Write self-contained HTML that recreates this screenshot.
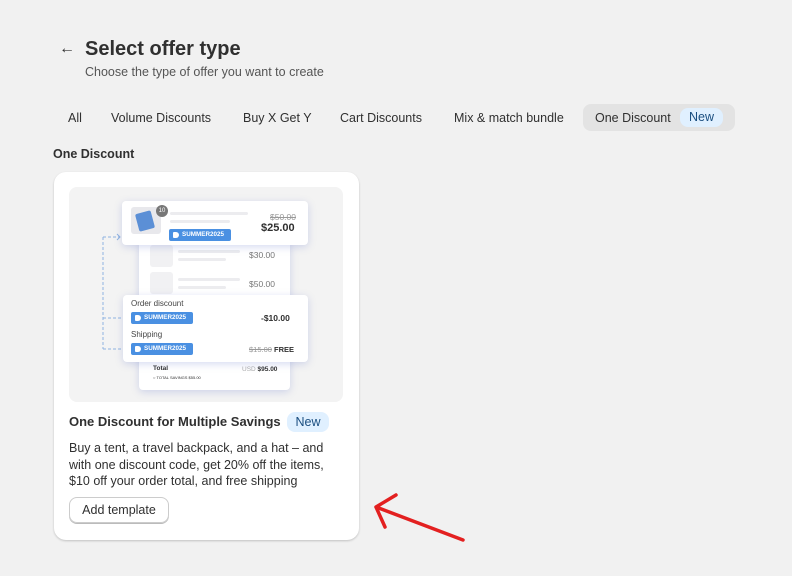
<!DOCTYPE html><html><head><style>
*{margin:0;padding:0;box-sizing:border-box}
body{width:792px;height:576px;background:#f1f1f1;font-family:"Liberation Sans",sans-serif;color:#303030;position:relative;overflow:hidden}
.a{position:absolute;white-space:nowrap}
.tab{position:absolute;top:111px;font-size:12.5px;color:#303030}
.tag{position:absolute;background:#4a90e2;color:#fff;font-size:6.3px;font-weight:bold;border-radius:2px;height:12px;line-height:12px;padding-left:13px;overflow:hidden}
.tag:before{content:"";position:absolute;left:4px;top:3px;width:6px;height:6px;background:#fff;border-radius:1px 3px 3px 1px}
.ln{position:absolute;height:3px;background:#ececef;border-radius:2px}
.sq{position:absolute;width:23px;height:22px;background:#f1f1f3;border-radius:3px}
.c{position:absolute;background:#fff;border-radius:4px;box-shadow:0 2px 8px rgba(90,110,200,.25)}
</style></head><body>
<div class="a" style="left:59px;top:40px;font-size:16px">&#8592;</div>
<div class="a" style="left:85px;top:38px;font-size:20px;font-weight:bold;color:#303030">Select offer type</div>
<div class="a" style="left:85px;top:65px;font-size:12.5px;color:#555">Choose the type of offer you want to create</div>
<div style="position:absolute;left:583px;top:104px;width:152px;height:27px;background:#e3e3e3;border-radius:8px"></div>
<div class="tab" style="left:68px">All</div>
<div class="tab" style="left:111px">Volume Discounts</div>
<div class="tab" style="left:243px">Buy X Get Y</div>
<div class="tab" style="left:340px">Cart Discounts</div>
<div class="tab" style="left:454px">Mix &amp; match bundle</div>
<div class="tab" style="left:595px">One Discount</div>
<div class="a" style="left:680px;top:108px;width:43px;height:19px;background:#e0f0ff;border-radius:8px;font-size:12.5px;color:#1a4e80;text-align:center;line-height:19px">New</div>
<div class="a" style="left:53px;top:147px;font-size:12.5px;font-weight:bold">One Discount</div>
<div style="position:absolute;left:54px;top:172px;width:305px;height:368px;background:#fff;border-radius:12px;box-shadow:0 1px 2px rgba(0,0,0,.2)"></div>
<div style="position:absolute;left:69px;top:187px;width:274px;height:215px;background:#f3f3f3;border-radius:8px"></div>
<svg style="position:absolute;left:0;top:0" width="792" height="576">
<path d="M103 237V349M103 237H120M103 318H129M103 349H129" stroke="#8fb3e0" stroke-dasharray="3 2" fill="none"/>
<path d="M117 234l3 3-3 3M126 315l3 3-3 3M126 346l3 3-3 3" stroke="#8fb3e0" fill="none"/>
<path d="M463 540L376 507M376 507L396 495M376 507L385 527" stroke="#e32020" stroke-width="3.5" stroke-linecap="round" fill="none"/>
</svg>
<div class="c" style="left:139px;top:240px;width:151px;height:150px"></div>
<div class="sq" style="left:150px;top:245px"></div><div class="ln" style="left:178px;top:250px;width:62px"></div><div class="ln" style="left:178px;top:258px;width:48px"></div>
<div class="a" style="left:249px;top:250px;font-size:8.5px;color:#777">$30.00</div>
<div class="sq" style="left:150px;top:272px"></div><div class="ln" style="left:178px;top:278px;width:62px"></div><div class="ln" style="left:178px;top:286px;width:48px"></div>
<div class="a" style="left:249px;top:279px;font-size:8.5px;color:#777">$50.00</div>
<div class="a" style="left:153px;top:365px;font-size:6.5px;font-weight:bold">Total</div>
<div class="a" style="left:153px;top:375px;font-size:4px">&#9675; TOTAL SAVINGS $55.00</div>
<div class="a" style="left:242px;top:366px;font-size:6.5px;font-weight:bold"><span style="color:#aaa;font-weight:normal">USD</span> $95.00</div>
<div class="c" style="left:122px;top:201px;width:186px;height:44px"></div>
<div style="position:absolute;left:131px;top:207px;width:30px;height:27px;background:#e8e8ec;border-radius:3px"></div>
<div style="position:absolute;left:137px;top:212px;width:16px;height:18px;background:#5b8fd6;border-radius:2px;transform:rotate(-15deg)"></div>
<div class="a" style="left:156px;top:205px;width:12px;height:12px;border-radius:6px;background:#777;color:#fff;font-size:6px;text-align:center;line-height:12px">10</div>
<div class="ln" style="left:170px;top:212px;width:78px"></div><div class="ln" style="left:170px;top:220px;width:60px"></div>
<div class="tag" style="left:169px;top:229px;width:62px">SUMMER2025</div>
<div class="a" style="left:270px;top:212px;font-size:8.5px;color:#999;text-decoration:line-through">$50.00</div>
<div class="a" style="left:261px;top:222px;font-size:11px;font-weight:bold">$25.00</div>
<div class="c" style="left:123px;top:295px;width:185px;height:67px"></div>
<div class="a" style="left:131px;top:299px;font-size:8px;color:#444">Order discount</div>
<div class="tag" style="left:131px;top:312px;width:62px">SUMMER2025</div>
<div class="a" style="left:261px;top:313px;font-size:8.5px;font-weight:bold">-$10.00</div>
<div class="a" style="left:131px;top:330px;font-size:8px;color:#444">Shipping</div>
<div class="tag" style="left:131px;top:343px;width:62px">SUMMER2025</div>
<div class="a" style="left:249px;top:345px;font-size:7.5px;font-weight:bold"><span style="color:#999;font-weight:normal;text-decoration:line-through">$15.00</span> FREE</div>
<div class="a" style="left:69px;top:414px;font-size:13px;font-weight:bold">One Discount for Multiple Savings</div>
<div class="a" style="left:287px;top:412px;width:42px;height:20px;background:#e0f0ff;border-radius:8px;font-size:12.5px;color:#1a4e80;text-align:center;line-height:20px">New</div>
<div class="a" style="left:69px;top:440px;font-size:12.5px;line-height:16.5px;color:#303030">Buy a tent, a travel backpack, and a hat – and<br>with one discount code, get 20% off the items,<br>$10 off your order total, and free shipping</div>
<div class="a" style="left:69px;top:497px;width:100px;height:26px;border:1px solid #ccc;border-radius:8px;box-shadow:0 1px 0 #bbb;font-size:12.5px;text-align:center;line-height:24px">Add template</div>
</body></html>
